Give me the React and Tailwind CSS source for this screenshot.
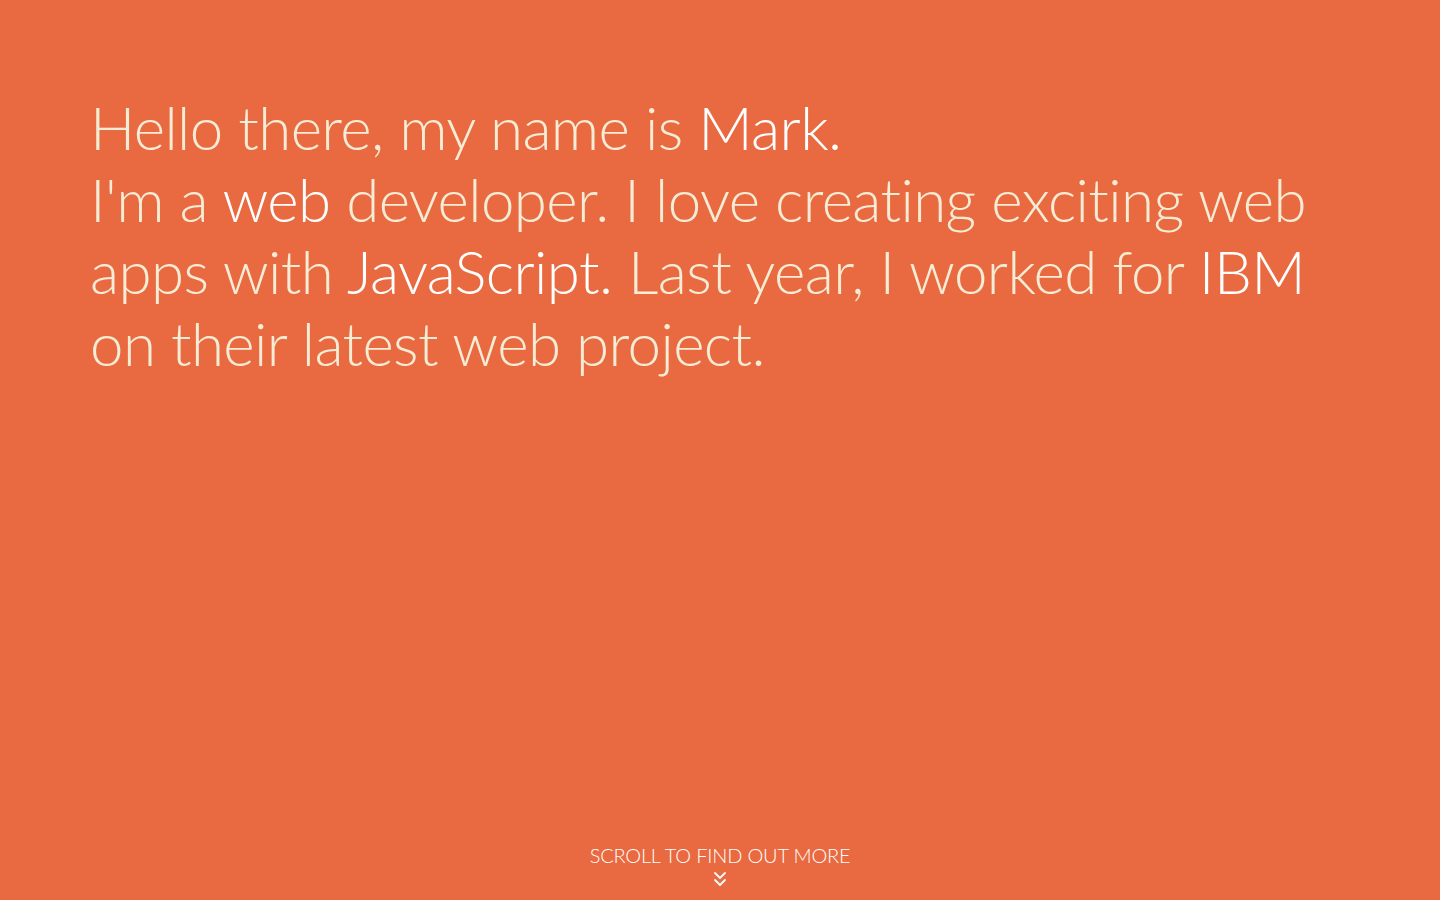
import React from "react";
import { ChevronsDown } from "lucide-react";

export default function App() {
  return (
    <div
      className="relative h-[900px] w-full overflow-hidden bg-[#e96a40] text-[#f5ecd6]"
      style={{ fontFamily: "Lato, 'Open Sans', sans-serif" }}
    >
      {/* Intro */}
      <div className="px-[90px] pt-[91px]">
        <h1 className="text-[60px] font-light leading-[1.2] tracking-[-0.6px]">
          Hello there, my name is <span className="text-white">Mark.</span>
          <br />
          I'm a <span className="text-white">web</span> developer. I love creating exciting web
          apps with <span className="text-white">JavaScript.</span> Last year, I worked for{" "}
          <span className="text-white">IBM</span> on their latest web project.
        </h1>
      </div>

      {/* Scroll hint */}
      <div className="absolute bottom-[9px] left-0 right-0 flex flex-col items-center text-white">
        <span className="text-[20px] font-light leading-none tracking-[-0.2px]">
          SCROLL TO FIND OUT MORE
        </span>
        <ChevronsDown className="mt-[2px] h-[24px] w-[24px]" strokeWidth={1.8} />
      </div>
    </div>
  );
}
